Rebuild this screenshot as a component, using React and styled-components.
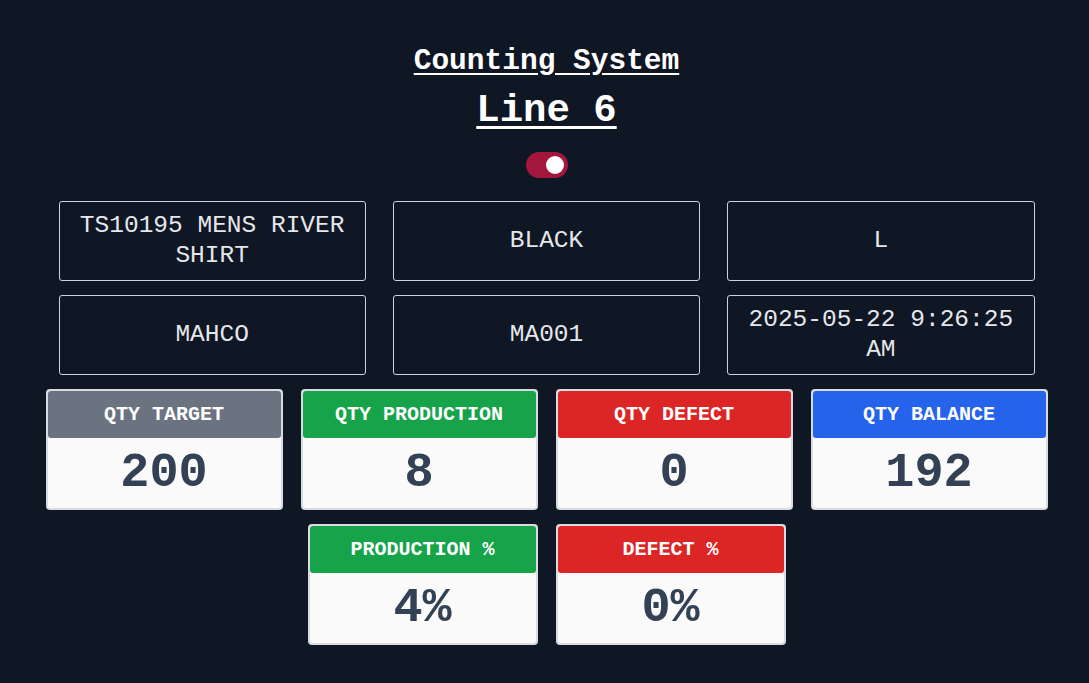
import React from 'react'
import styled, { createGlobalStyle } from 'styled-components';

const GlobalStyle = createGlobalStyle`
  html, body {
    margin: 0;
    padding: 0;
    background: #0f1624;
  }
  body {
    font-family: "Liberation Mono", monospace;
  }
`;

const info = [
  'TS10195 MENS RIVER SHIRT',
  'BLACK',
  'L',
  'MAHCO',
  'MA001',
  '2025-05-22 9:26:25 AM',
];

const stats = [
  { label: 'QTY TARGET', value: '200', color: '#6b7280' },
  { label: 'QTY PRODUCTION', value: '8', color: '#16a34a' },
  { label: 'QTY DEFECT', value: '0', color: '#dc2626' },
  { label: 'QTY BALANCE', value: '192', color: '#2563eb' },
];

const percents = [
  { label: 'PRODUCTION %', value: '4%', color: '#16a34a' },
  { label: 'DEFECT %', value: '0%', color: '#dc2626' },
];

function StatCard({ label, value, color, width }) {
  return (
    <Card width={width}>
      <CardHeader bg={color}>{label}</CardHeader>
      <CardValue>{value}</CardValue>
    </Card>
  )
}

function App() {
  return (
    <>
      <GlobalStyle />
      <Page>
        <Title>Counting System</Title>
        <LineTitle>Line 6</LineTitle>
        <Toggle>
          <Knob />
        </Toggle>
        <InfoGrid>
          {info.map((text) => (
            <InfoBox key={text}>{text}</InfoBox>
          ))}
        </InfoGrid>
        <CardRow>
          {stats.map((s) => (
            <StatCard key={s.label} {...s} width={237} />
          ))}
        </CardRow>
        <CardRow>
          {percents.map((s) => (
            <StatCard key={s.label} {...s} width={230} />
          ))}
        </CardRow>
      </Page>
    </>
  )
}

export default App

const Page = styled.div`
  min-height: 683px;
  display: flex;
  flex-direction: column;
  align-items: center;
  padding: 43px 0 0 4px;
  box-sizing: border-box;
  color: #f1f5f9;
`;

const Title = styled.h1`
  margin: 0;
  font-size: 29.5px;
  line-height: 36px;
  font-weight: 700;
  text-decoration: underline;
  text-underline-offset: 4px;
  color: #ffffff;
`;

const LineTitle = styled.h2`
  margin: 10px 0 0;
  font-size: 39px;
  line-height: 44px;
  font-weight: 700;
  text-decoration: underline;
  text-underline-offset: 5px;
  color: #ffffff;
`;

const Toggle = styled.div`
  margin-top: 19px;
  width: 42px;
  height: 26px;
  border-radius: 13px;
  background: #a3173d;
  display: flex;
  align-items: center;
  justify-content: flex-end;
  padding: 0 4px;
  box-sizing: border-box;
`;

const Knob = styled.div`
  width: 18px;
  height: 18px;
  border-radius: 50%;
  background: #ffffff;
`;

const InfoGrid = styled.div`
  margin-top: 23px;
  width: 976px;
  display: grid;
  grid-template-columns: repeat(3, 1fr);
  column-gap: 27px;
  row-gap: 14px;
`;

const InfoBox = styled.div`
  height: 80px;
  box-sizing: border-box;
  border: 1px solid #cbd5e1;
  border-radius: 3px;
  display: flex;
  align-items: center;
  justify-content: center;
  text-align: center;
  padding: 0 16px;
  font-size: 24.5px;
  line-height: 30px;
  color: #e5e7eb;
`;

const CardRow = styled.div`
  margin-top: 14px;
  display: flex;
  justify-content: center;
  gap: 18px;
`;

const Card = styled.div`
  width: ${(p) => p.width}px;
  height: 121px;
  box-sizing: border-box;
  background: #fafafa;
  border: 2px solid #d8dbe2;
  border-radius: 4px;
  display: flex;
  flex-direction: column;
`;

const CardHeader = styled.div`
  height: 47px;
  background: ${(p) => p.bg};
  border-radius: 3px;
  display: flex;
  align-items: center;
  justify-content: center;
  color: #ffffff;
  font-size: 20px;
  font-weight: 700;
`;

const CardValue = styled.div`
  flex: 1;
  display: flex;
  align-items: center;
  justify-content: center;
  font-size: 48.5px;
  font-weight: 700;
  color: #334155;
`;
